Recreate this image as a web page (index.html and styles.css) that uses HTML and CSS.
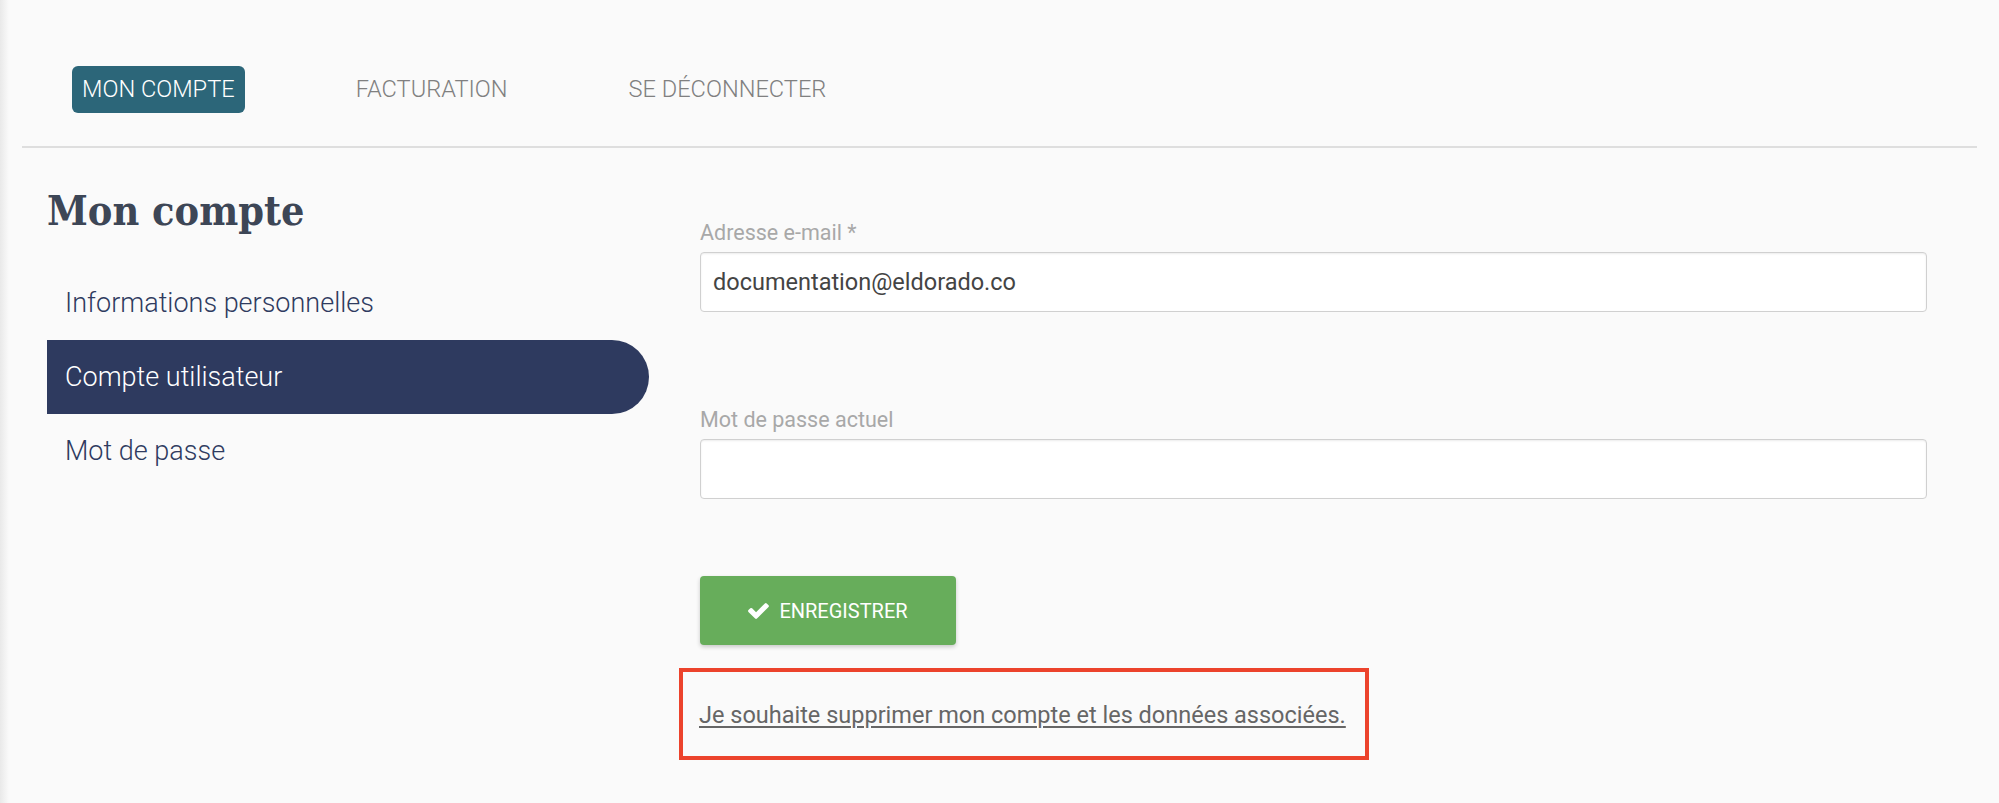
FILE: index.html
```html
<!DOCTYPE html>
<html lang="fr">
<head>
  <meta charset="UTF-8">
  <meta name="viewport" content="width=device-width, initial-scale=1.0">
  <title>Mon compte</title>
  <link rel="stylesheet" href="styles.css">
</head>
<body>
  <header class="top-nav">
    <a class="nav-link active" href="#">Mon compte</a>
    <a class="nav-link" href="#">Facturation</a>
    <a class="nav-link" href="#">Se déconnecter</a>
  </header>

  <main class="account">
    <aside class="sidebar">
      <h1>Mon compte</h1>
      <ul class="side-menu">
        <li><a href="#">Informations personnelles</a></li>
        <li class="active"><a href="#">Compte utilisateur</a></li>
        <li><a href="#">Mot de passe</a></li>
      </ul>
    </aside>

    <section class="account-form">
      <div class="field">
        <label for="email">Adresse e-mail *</label>
        <input id="email" type="email" value="documentation@eldorado.co">
      </div>
      <div class="field field-last">
        <label for="password">Mot de passe actuel</label>
        <input id="password" type="password">
      </div>

      <button class="save-btn" type="button">
        <svg width="21" height="16" viewBox="121 334 1550 1188" aria-hidden="true">
          <path fill="#fff" d="M1671 566q0 40-28 68l-724 724-136 136q-28 28-68 28t-68-28l-136-136-362-362q-28-28-28-68t28-68l136-136q28-28 68-28t68 28l294 295 656-657q28-28 68-28t68 28l136 136q28 28 28 68z"/>
        </svg>
        Enregistrer
      </button>

      <div class="delete-box">
        <a href="#" class="delete-link">Je souhaite supprimer mon compte et les données associées.</a>
      </div>
    </section>
  </main>
</body>
</html>
```

FILE: styles.css
```css
body {
  margin: 0;
  padding: 0;
  min-height: 100vh;
  font-family: Roboto, "Liberation Sans", Arial, sans-serif;
  background: linear-gradient(to right, #e9e9e9, #fafafa 9px) #fafafa;
}
a {
  text-decoration: none;
}
.top-nav {
  margin: 0 22px;
  padding: 66px 0 33px 50px;
  border-bottom: 2px solid #dedede;
  display: flex;
  gap: 101px;
}
.nav-link {
  height: 47px;
  line-height: 47px;
  padding: 0 10px;
  border-radius: 6px;
  font-size: 23.6px;
  font-weight: 300;
  text-transform: uppercase;
  color: #808080;
}
.nav-link.active {
  background-color: #2c6679;
  color: #fff;
}
.account {
  display: flex;
  padding-left: 47px;
}
.sidebar {
  width: 602px;
  padding-top: 40px;
}
.sidebar h1 {
  margin: 0 0 32px;
  font-family: "DejaVu Serif Condensed", "DejaVu Serif", "Liberation Serif", serif;
  font-size: 41px;
  line-height: 46px;
  font-weight: bold;
  color: #3d4656;
}
.side-menu {
  margin: 0;
  padding: 0;
  list-style: none;
}
.side-menu a {
  display: block;
  height: 74px;
  line-height: 74px;
  padding-left: 18px;
  font-size: 27px;
  font-weight: 300;
  color: #2f3b60;
}
.side-menu li.active a {
  background-color: #2e3a5f;
  color: #fff;
  border-radius: 0 37px 37px 0;
}
.account-form {
  width: 1227px;
  margin-left: 51px;
  padding-top: 72px;
}
.field {
  margin-bottom: 95px;
}
.field.field-last {
  margin-bottom: 77px;
}
.field label {
  display: block;
  margin-bottom: 6px;
  font-size: 21.5px;
  line-height: 26px;
  color: #a8a8a8;
}
.field input {
  display: block;
  box-sizing: border-box;
  width: 100%;
  height: 60px;
  padding: 0 12px;
  border: 1px solid #d0d0d0;
  border-radius: 4px;
  box-shadow: inset 0 1px 2px rgba(0, 0, 0, 0.08);
  background-color: #fff;
  font-family: inherit;
  font-size: 23.5px;
  color: #444;
  outline: none;
}
.save-btn {
  display: flex;
  align-items: center;
  justify-content: center;
  gap: 10px;
  width: 256px;
  height: 69px;
  border: none;
  border-radius: 4px;
  background-color: #67ad5b;
  box-shadow: 0 2px 4px rgba(0, 0, 0, 0.2);
  font-family: inherit;
  font-size: 20px;
  text-transform: uppercase;
  color: #fff;
  cursor: pointer;
}
.delete-box {
  box-sizing: border-box;
  width: 690px;
  margin: 23px 0 0 -21px;
  padding: 29px 16px 27px 16px;
  border: 4px solid #ec432c;
}
.delete-link {
  font-size: 23.5px;
  line-height: 28px;
  color: #666;
  text-decoration: underline;
  text-underline-offset: 3px;
}
```
